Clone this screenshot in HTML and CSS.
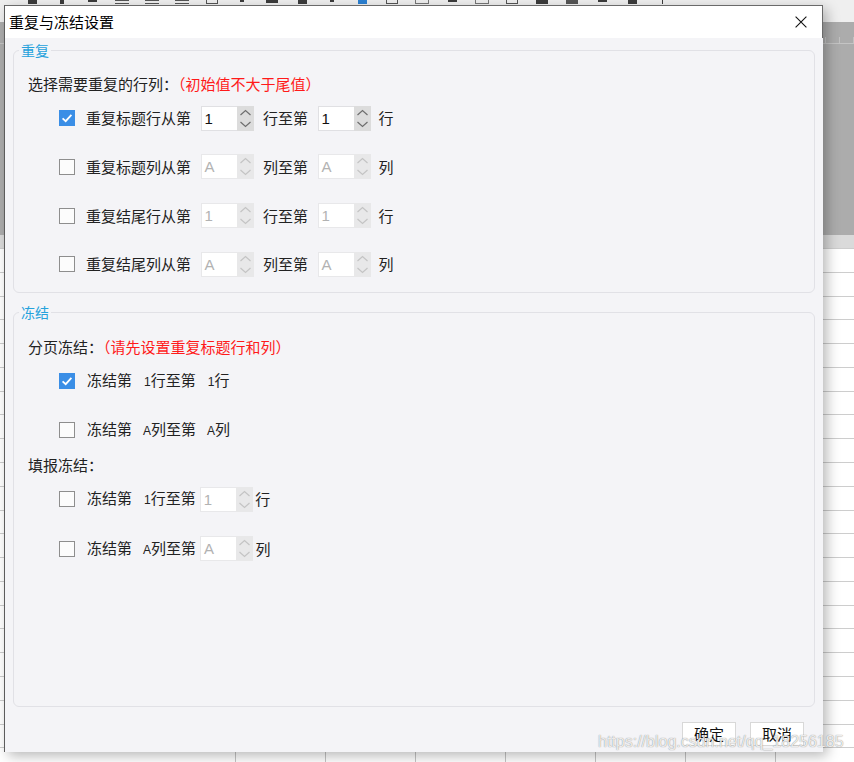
FILE: index.html
```html
<!DOCTYPE html>
<html lang="zh-CN">
<head>
<meta charset="utf-8">
<title>重复与冻结设置</title>
<link rel="stylesheet" href="styles.css">
</head>
<body>
<div class="desk">
  <div class="toolbar">
    <div class="tb-items">
      <span class="tb"><span class="mk w9 h4"></span></span>
      <span class="tb"><span class="mk w4 h4"></span></span>
      <span class="tb"><span class="mk w9 h2"></span></span>
      <span class="tb"><span class="mk w14 lines"></span></span>
      <span class="tb"><span class="mk w14 lines"></span></span>
      <span class="tb"><span class="mk w14 lines"></span></span>
      <span class="tb"><span class="mk w12 grid"></span></span>
      <span class="tb"><span class="mk w4 h2"></span></span>
      <span class="tb"><span class="mk w12 h3"></span></span>
      <span class="tb"><span class="mk w9 h4"></span></span>
      <span class="tb"><span class="mk w4 h2"></span></span>
      <span class="tb"><span class="mk w9 h4 blue"></span></span>
      <span class="tb"><span class="mk w12 grid"></span></span>
      <span class="tb"><span class="mk w14 box"></span></span>
      <span class="tb"><span class="mk w9 h2"></span></span>
      <span class="tb"><span class="mk w14 box"></span></span>
      <span class="tb"><span class="mk w12 grid"></span></span>
      <span class="tb"><span class="mk w12 h4"></span></span>
      <span class="tb"><span class="mk w12 h4 dark"></span></span>
      <span class="tb"><span class="mk w9 h2"></span></span>
      <span class="tb"><span class="mk w9 h4"></span></span>
      <span class="tb"><span class="mk w1 h4"></span></span>
    </div>
  </div>
  <div class="panel"><div class="ruler"></div></div>
  <div class="colhead"></div>
  <div class="sheet"></div>
</div>

<div class="dialog">
  <div class="titlebar">
    <span class="title">重复与冻结设置</span>
    <svg class="close" viewBox="0 0 12 12"><path d="M0.6 0.6L11.4 11.4M11.4 0.6L0.6 11.4" stroke="#111" stroke-width="1.1" fill="none"/></svg>
  </div>
  <div class="dbody">
    <fieldset class="group group-repeat">
      <legend>重复</legend>
      <div class="caption">选择需要重复的行列：<span class="hint">（初始值不大于尾值）</span></div>

      <div class="opt lead">
        <span class="cb on"><svg viewBox="0 0 16 16"><path d="M3.6 8.3L6.7 11.2L12.4 4.9" fill="none" stroke="#fff" stroke-width="1.8"/></svg></span>
        <span>重复标题行从第</span>
        <span class="spin"><span class="field">1</span><span class="arrows"><svg viewBox="0 0 17 25"><path d="M3.5 9L8.5 4.5L13.5 9M3.5 16L8.5 20.5L13.5 16" fill="none" stroke="#6e6e6e" stroke-width="1.2"/></svg></span></span>
        <span>行至第</span>
        <span class="spin"><span class="field">1</span><span class="arrows"><svg viewBox="0 0 17 25"><path d="M3.5 9L8.5 4.5L13.5 9M3.5 16L8.5 20.5L13.5 16" fill="none" stroke="#6e6e6e" stroke-width="1.2"/></svg></span></span>
        <span class="end">行</span>
      </div>

      <div class="opt step">
        <span class="cb"></span>
        <span>重复标题列从第</span>
        <span class="spin off"><span class="field">A</span><span class="arrows"><svg viewBox="0 0 17 25"><path d="M3.5 9L8.5 4.5L13.5 9M3.5 16L8.5 20.5L13.5 16" fill="none" stroke="#c4c4c4" stroke-width="1.2"/></svg></span></span>
        <span>列至第</span>
        <span class="spin off"><span class="field">A</span><span class="arrows"><svg viewBox="0 0 17 25"><path d="M3.5 9L8.5 4.5L13.5 9M3.5 16L8.5 20.5L13.5 16" fill="none" stroke="#c4c4c4" stroke-width="1.2"/></svg></span></span>
        <span class="end">列</span>
      </div>

      <div class="opt step">
        <span class="cb"></span>
        <span>重复结尾行从第</span>
        <span class="spin off"><span class="field">1</span><span class="arrows"><svg viewBox="0 0 17 25"><path d="M3.5 9L8.5 4.5L13.5 9M3.5 16L8.5 20.5L13.5 16" fill="none" stroke="#c4c4c4" stroke-width="1.2"/></svg></span></span>
        <span>行至第</span>
        <span class="spin off"><span class="field">1</span><span class="arrows"><svg viewBox="0 0 17 25"><path d="M3.5 9L8.5 4.5L13.5 9M3.5 16L8.5 20.5L13.5 16" fill="none" stroke="#c4c4c4" stroke-width="1.2"/></svg></span></span>
        <span class="end">行</span>
      </div>

      <div class="opt step">
        <span class="cb"></span>
        <span>重复结尾列从第</span>
        <span class="spin off"><span class="field">A</span><span class="arrows"><svg viewBox="0 0 17 25"><path d="M3.5 9L8.5 4.5L13.5 9M3.5 16L8.5 20.5L13.5 16" fill="none" stroke="#c4c4c4" stroke-width="1.2"/></svg></span></span>
        <span>列至第</span>
        <span class="spin off"><span class="field">A</span><span class="arrows"><svg viewBox="0 0 17 25"><path d="M3.5 9L8.5 4.5L13.5 9M3.5 16L8.5 20.5L13.5 16" fill="none" stroke="#c4c4c4" stroke-width="1.2"/></svg></span></span>
        <span class="end">列</span>
      </div>
    </fieldset>

    <fieldset class="group group-freeze">
      <legend>冻结</legend>
      <div class="caption">分页冻结：<span class="hint">（请先设置重复标题行和列）</span></div>

      <div class="opt lead">
        <span class="cb on"><svg viewBox="0 0 16 16"><path d="M3.6 8.3L6.7 11.2L12.4 4.9" fill="none" stroke="#fff" stroke-width="1.8"/></svg></span>
        <span class="ft">冻结第<span class="num">1</span>行至第<span class="num">1</span>行</span>
      </div>

      <div class="opt step2">
        <span class="cb"></span>
        <span class="ft">冻结第<span class="num al">A</span>列至第<span class="num al">A</span>列</span>
      </div>

      <div class="caption sub">填报冻结：</div>

      <div class="opt lead2">
        <span class="cb"></span>
        <span class="ft">冻结第<span class="num">1</span>行至第</span>
        <span class="spin off tight"><span class="field">1</span><span class="arrows"><svg viewBox="0 0 17 25"><path d="M3.5 9L8.5 4.5L13.5 9M3.5 16L8.5 20.5L13.5 16" fill="none" stroke="#c4c4c4" stroke-width="1.2"/></svg></span></span>
        <span>行</span>
      </div>

      <div class="opt step2">
        <span class="cb"></span>
        <span class="ft">冻结第<span class="num al">A</span>列至第</span>
        <span class="spin off tight"><span class="field">A</span><span class="arrows"><svg viewBox="0 0 17 25"><path d="M3.5 9L8.5 4.5L13.5 9M3.5 16L8.5 20.5L13.5 16" fill="none" stroke="#c4c4c4" stroke-width="1.2"/></svg></span></span>
        <span>列</span>
      </div>
    </fieldset>

    <div class="footer">
      <button class="btn">确定</button>
      <button class="btn">取消</button>
    </div>
  </div>
</div>

<div class="watermark">https://blog.csdn.net/qq_18256185</div>
</body>
</html>
```

FILE: styles.css
```css
* { box-sizing: border-box; }
html, body { margin: 0; padding: 0; }
body {
  width: 854px;
  height: 762px;
  overflow: hidden;
  position: relative;
  background: #fff;
  font-family: "Noto Sans CJK SC", "Noto Sans", sans-serif;
  color: #222;
}

/* ---------- background application ---------- */
.desk { display: flex; flex-direction: column; height: 762px; }
.toolbar { height: 22px; flex: none; background: #efefef; overflow: hidden; }
.tb-items { display: flex; align-items: flex-end; height: 5px; padding-left: 17px; }
.tb {
  width: 30px;
  height: 5px;
  flex: none;
  display: flex;
  justify-content: center;
  align-items: flex-start;
}
.mk { display: block; background: #3c3c3c; }
.w1 { width: 1px; }
.w4 { width: 4px; }
.w9 { width: 9px; }
.w12 { width: 12px; }
.w14 { width: 14px; }
.h2 { height: 2px; }
.h3 { height: 3px; }
.h4 { height: 4px; }
.lines { height: 4px; background: linear-gradient(#555 0 1px, transparent 1px 3px, #555 3px 4px); }
.grid { height: 4px; background: transparent; border: 1px solid #555; border-top: 0; }
.box { height: 4px; background: transparent; border: 1px solid #777; border-top: 0; }
.blue { background: #2b80d2; }
.dark { background: #555; }

.panel { height: 213px; flex: none; background: #acacac; padding-top: 8px; }
.ruler {
  height: 14px;
  border-bottom: 1px solid #c4c4c4;
  background: repeating-linear-gradient(to right, transparent 0 13px, #c2c2c2 13px 14px) left bottom / 100% 6px no-repeat;
}
.colhead { height: 13px; flex: none; background: #dadada; }
.sheet {
  flex: 1;
  background-color: #fff;
  background-image:
    repeating-linear-gradient(to bottom, #cdcdcd 0 1px, transparent 1px 23.78px),
    repeating-linear-gradient(to right, transparent 0 55.5px, #c4c4c4 55.5px 56.5px, transparent 56.5px 90px);
}

/* ---------- dialog ---------- */
.dialog {
  position: absolute;
  left: 4px;
  top: 5px;
  width: 819px;
  height: 747px;
  display: flex;
  flex-direction: column;
  border-top: 1px solid #6a6a6a;
  border-left: 1px solid #5c5c5c;
  box-shadow: 4px 4px 12px rgba(0, 0, 0, 0.28);
}
.titlebar {
  height: 32px;
  flex: none;
  background: #fff;
  border-right: 1px solid #6a6a6a;
  display: flex;
  align-items: center;
  padding: 0 15px 0 4px;
}
.title { font-size: 15px; line-height: 20px; color: #000; }
.close { margin-left: auto; width: 12px; height: 12px; display: block; }

.dbody {
  flex: 1;
  background: #f4f4f7;
  padding: 3px 8px 0 8px;
  display: flex;
  flex-direction: column;
}

.group {
  margin: 0;
  padding: 0 14px 15px;
  border: 1px solid #e1e1e6;
  border-radius: 6px;
  min-width: 0;
}
.group legend {
  margin-left: -9px;
  padding: 0 2px;
  font-size: 14px;
  line-height: 18px;
  color: #26a2dc;
}
.group-freeze { margin-top: 10.5px; flex: 1; }

.caption { margin-top: 15px; font-size: 15px; line-height: 20px; white-space: nowrap; }
.group-freeze .caption { margin-top: 15.2px; }
.group-freeze .caption.sub { margin-top: 12.5px; }
.hint { color: #ff1a1a; font-feature-settings: "halt"; }

.opt {
  display: flex;
  align-items: center;
  height: 25px;
  padding-left: 31px;
  font-size: 15px;
  line-height: 20px;
  white-space: nowrap;
}
.opt.lead { margin-top: 11.5px; }
.opt.step { margin-top: 23.8px; }
.opt.step2 { margin-top: 24.4px; }
.opt.lead2 { margin-top: 12px; }
.ft { margin-left: 1px; }

.cb {
  width: 16px;
  height: 16px;
  flex: none;
  margin-right: 11px;
  border: 1px solid #8e8e8e;
  background: #fcfcfc;
}
.cb svg { display: block; width: 16px; height: 16px; margin: -1px; }
.cb.on { background: #3a8ee6; border-color: #3a8ee6; }

.num { font-family: "Liberation Sans", sans-serif; font-size: 12px; margin-left: 12px; }
.num.al { margin-left: 11px; }

.spin { display: flex; width: 53px; height: 25px; flex: none; margin: 0 9.5px; }
.spin.tight { margin: 0 2.5px 0 4px; }
.field {
  width: 36px;
  height: 100%;
  background: #fff;
  border: 1px solid #e0e0e3;
  border-right: 0;
  padding-left: 3px;
  font: 15px/23px "Liberation Sans", sans-serif;
  color: #111;
}
.arrows { width: 17px; height: 100%; background: #dcdcdc; }
.arrows svg { display: block; width: 17px; height: 25px; }
.spin.off .field { color: #b2b2b2; border-color: #e8e8ea; }
.spin.off .arrows { background: #e8e8e9; }
.end { margin-left: -1.5px; }

.footer {
  height: 45px;
  flex: none;
  display: flex;
  justify-content: flex-end;
  align-items: flex-start;
  gap: 14px;
  padding: 15px 11px 0 0;
}
.btn {
  width: 54px;
  height: 24px;
  padding: 0;
  margin: 0;
  background: #fff;
  border: 1px solid #d8d8d8;
  font-family: "Noto Sans CJK SC", sans-serif;
  font-size: 15px;
  line-height: 22px;
  color: #111;
}

.watermark {
  position: absolute;
  left: 598px;
  top: 732px;
  font: 16px/20px "Liberation Sans", sans-serif;
  color: rgba(255, 255, 255, 0.85);
  text-shadow: 0 0 1px rgba(100, 100, 100, 0.9);
  pointer-events: none;
  white-space: nowrap;
}
```
